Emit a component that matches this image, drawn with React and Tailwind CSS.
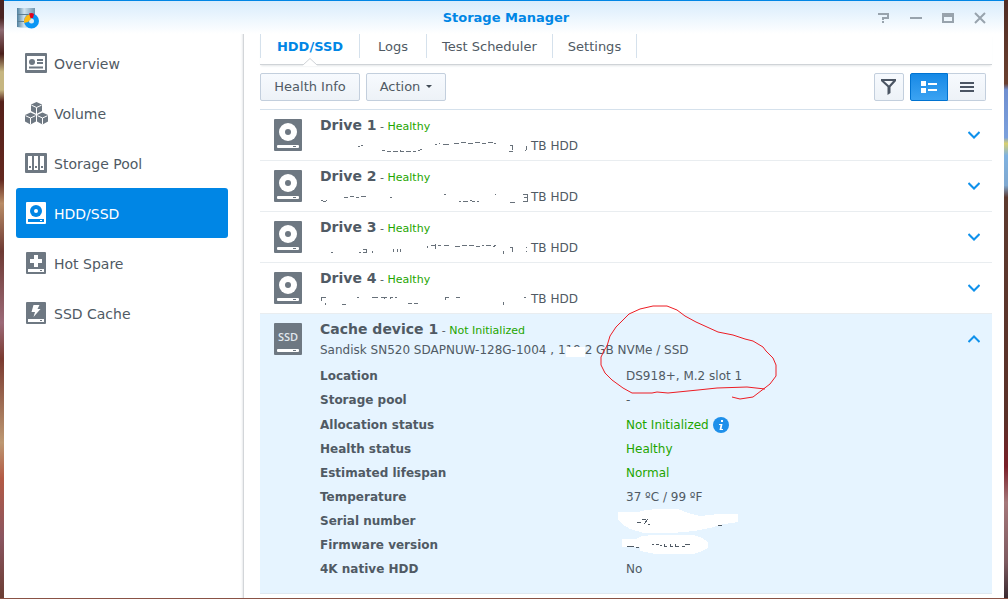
import { useState } from "react";

const menu = [
  { id: "overview", label: "Overview" },
  { id: "volume", label: "Volume" },
  { id: "pool", label: "Storage Pool" },
  { id: "hdd", label: "HDD/SSD" },
  { id: "spare", label: "Hot Spare" },
  { id: "cache", label: "SSD Cache" },
];

const tabs = ["HDD/SSD", "Logs", "Test Scheduler", "Settings"];

// marks: what is left of the erased model names
const drives = [
  {
    name: "Drive 1",
    marks:
      "M38 5h2M41 4h2M62 9h3M67 10h4M73 10h5M80 9v1h4M86 10h5M93 10h3M98 9h2l2-1M115 3h2M119 2h1M123 3h6M134 2h5M141 1h5M148 2h5M155 1h5M162 2h4M168 1h5M174 2h2M190 4h2v5M189 10h4M206 5v4l-1 1",
  },
  {
    name: "Drive 2",
    marks:
      "M1 8l2 1h3l1-1M24 5h4M30 4h4M36 5h3M41 4h5M70 5h2M124 2h2M139 9h2M143 9h5M150 8l2 1h3M157 9h2M175 2h1M190 10h5M203 2h4v3h-3M206 5h1v4h-4",
  },
  {
    name: "Drive 3",
    marks:
      "M11 9h2M39 9h2M43 6h3v3h-3M52 8v2M73 6v3M77 9v-3M80 6v3M107 3v2M111 3l4-1v4M118 2h3M124 2h5M135 3h5M142 2h5M149 2h5M156 3h4M162 2h2M166 2h5M173 4l3-2M184 8l-1 3M190 4h2v5M206 4v1M206 8v1",
  },
  {
    name: "Drive 4",
    marks:
      "M6 3h-4l-1 2v2M5 9v2M22 10l4 1M37 3h2M52 4l2-1h4M61 3h6M64 3v2M70 5v-2h3M75 3h2M88 9h4M94 9h4M125 6v-3h4M136 3h4M184 8l-1 3M204 4l2-1",
  },
];

const details = [
  { label: "Location", value: "DS918+, M.2 slot 1" },
  { label: "Storage pool", value: "-" },
  { label: "Allocation status", value: "Not Initialized", good: true, info: true },
  { label: "Health status", value: "Healthy", good: true },
  { label: "Estimated lifespan", value: "Normal", good: true },
  { label: "Temperature", value: "37 ºC / 99 ºF" },
  { label: "Serial number", value: <SerialSmudge /> },
  { label: "Firmware version", value: <FirmwareSmudge /> },
  { label: "4K native HDD", value: "No" },
];

function SerialSmudge() {
  return (
    <svg width="122" height="26" viewBox="0 0 122 26" className="-ml-2" shapeRendering="crispEdges">
      <path
        fill="#fff"
        d="M0 4h20l8-2 12-1h20l10 4 12 3 18-2h20v8l-14 2-14 4-16 3-22 2H26l-14-4-8-5-4-5z"
      />
      <path d="M19 14h4M24 11h4M30 11l-4 5M30 16h2M100 17h4" stroke="#505a64" fill="none" />
    </svg>
  );
}

function FirmwareSmudge() {
  return (
    <svg width="90" height="20" viewBox="0 0 90 20" className="-ml-1" shapeRendering="crispEdges">
      <path fill="#fff" d="M0 4h14l6-3 12-1h40l8 3 6 4v6l-6 3-8 3H34l-16-3V12H0z" />
      <path
        d="M5 11h7M14 12h3M30 9h2M34 9h3M38 10h2M42 9v2h3M48 9v2h3M53 9v2h4M60 11h3M63 9h5"
        stroke="#505a64"
        fill="none"
      />
    </svg>
  );
}

function MenuIcon({ id, active }) {
  const fg = active ? "#fff" : "#6e7882";
  const hole = active ? "#0086e5" : "#fff";
  if (id === "overview") {
    return (
      <svg width="24" height="24" viewBox="0 0 24 24">
        <rect x="1" y="2" width="22" height="20" rx="1" fill={fg} />
        <rect x="3" y="5" width="18" height="14" fill={hole} />
        <circle cx="8" cy="11" r="3" fill={fg} />
        <path d="M13 9h6M13 12h6M5 16.5h14" stroke={fg} strokeWidth="2" />
      </svg>
    );
  }
  if (id === "volume") {
    return (
      <svg width="24" height="24" viewBox="0 0 24 24">
        {[
          [12.5, 1],
          [6.5, 11.5],
          [18.5, 11.5],
        ].map(([x, y]) => (
          <g key={x} transform={`translate(${x} ${y})`}>
            <path d="M0 0l5.5 2.5v6.5L0 12l-5.5-3V2.5z" fill={fg} />
            <path d="M-5 3.2L0 5.5l5-2.3M0 5.5V12" stroke={hole} fill="none" />
          </g>
        ))}
      </svg>
    );
  }
  if (id === "pool") {
    return (
      <svg width="24" height="24" viewBox="0 0 24 24">
        <rect x="1" y="2" width="22" height="20" rx="1" fill={fg} />
        <path d="M4 5h4v14H4zM10 5h4v14h-4zM16 5h4v14h-4z" fill={hole} />
        <path d="M5 15h2v2H5zM11 15h2v2h-2zM17 15h2v2h-2z" fill={fg} />
      </svg>
    );
  }
  return (
    <svg width="24" height="24" viewBox="0 0 24 24">
      <rect x="2" y="1" width="20" height="22" rx="1" fill={fg} />
      <path d="M4 18h16v3H4z" fill={hole} />
      <path d="M16 19h2v1h-2z" fill={fg} />
      {id === "hdd" && (
        <>
          <circle cx="12" cy="10" r="6" fill={hole} />
          <circle cx="12" cy="10" r="2" fill={fg} />
        </>
      )}
      {id === "spare" && <path d="M10 4h4v4h4v4h-4v4h-4v-4H6V8h4z" fill={hole} />}
      {id === "cache" && <path d="M9.500 4H15.500L13.500 8H16.500L9.500 16L11 11H7.500z" fill={hole} />}
    </svg>
  );
}

function DriveIcon({ ssd }) {
  return (
    <svg width="28" height="32" viewBox="0 0 28 32" className="shrink-0">
      <rect width="28" height="32" rx="1" fill="#6e7882" />
      <rect x="3" y="26" width="22" height="3" rx="1" fill="#fff" />
      <path d="M19 27h3v1h-3z" fill="#6e7882" />
      {ssd ? (
        <text
          x="14"
          y="18"
          textAnchor="middle"
          fontSize="11"
          fontFamily="Open Sans, sans-serif"
          fontWeight="600"
          fill="#e1e8ee"
        >
          SSD
        </text>
      ) : (
        <>
          <circle cx="14" cy="13" r="9" fill="#fff" />
          <circle cx="14" cy="13" r="3" fill="#6e7882" />
        </>
      )}
    </svg>
  );
}

function Chevron({ up }) {
  return (
    <svg width="12" height="8" viewBox="0 0 12 8">
      <path
        d={up ? "M0.500 7L6 1.500L11.500 7" : "M0.500 1L6 6.500L11.500 1"}
        stroke="#0f91eb"
        strokeWidth="2"
        fill="none"
      />
    </svg>
  );
}

function DriveHeader({ name, status, open, ssd, onToggle, children }) {
  return (
    <div className="flex h-[50px] items-start pl-3.5 pr-3">
      <div className="pt-[9px]">
        <DriveIcon ssd={ssd} />
      </div>
      <div className="ml-[18px] flex-1 pt-[5px] whitespace-nowrap">
        <h3 className="text-[11px] leading-5">
          <span className="text-[14px] font-bold">{name}</span>
          <span> - </span>
          <span className="text-[#1ea500]">{status}</span>
        </h3>
        <div className="flex items-center text-[12px] leading-[18px]">{children}</div>
      </div>
      <button
        type="button"
        aria-label={`Toggle ${name}`}
        aria-expanded={open}
        onClick={onToggle}
        className="flex h-[50px] items-center"
      >
        <Chevron up={open} />
      </button>
    </div>
  );
}

function TitleBar() {
  return (
    <header className="grid h-[34px] grid-cols-3 items-center border-t border-[#0086e5] bg-linear-to-b from-[#d8ecfc] to-white pr-2 pl-3">
      <svg width="24" height="24" viewBox="0 0 24 24">
        <defs>
          <linearGradient id="disk">
            <stop offset="0" stopColor="#4f7f9e" />
            <stop offset="0.4" stopColor="#cfe3ef" />
            <stop offset="1" stopColor="#6f95ae" />
          </linearGradient>
        </defs>
        <path d="M1 2h18v18q-9 3-18 1z" fill="url(#disk)" />
        <path d="M1 8.500h18M1 15.500h10" stroke="#5b7f95" />
        <circle cx="15.500" cy="15" r="5" fill="#dcebf5" stroke="#0a96f5" strokeWidth="5" />
        <path d="M8 17A8 8 0 0 1 14 8L15 13L12 16z" fill="#fdb913" />
        <path d="M13 7.500Q16 6.500 18 8L17 12H14.500z" fill="#e2041b" />
      </svg>
      <h1 className="text-center text-[13px] font-bold text-[#0086e5]">Storage Manager</h1>
      <div className="flex justify-end text-[#98a3ad]">
        <button type="button" aria-label="Help" className="flex w-8 justify-center">
          <svg width="12" height="12" viewBox="0 0 12 12">
            <path d="M0 2h10v4H5v2" stroke="currentColor" strokeWidth="2" fill="none" />
            <path d="M4 9h2v2H4z" fill="currentColor" />
          </svg>
        </button>
        <button type="button" aria-label="Minimize" className="flex w-8 justify-center">
          <svg width="12" height="12" viewBox="0 0 12 12">
            <path d="M0 6h12" stroke="currentColor" strokeWidth="2" />
          </svg>
        </button>
        <button type="button" aria-label="Maximize" className="flex w-8 justify-center">
          <svg width="12" height="12" viewBox="0 0 12 12">
            <path d="M1 2v8h10V2" stroke="currentColor" strokeWidth="2" fill="none" />
            <path d="M0 1h12v4H0z" fill="currentColor" />
          </svg>
        </button>
        <button type="button" aria-label="Close" className="flex w-8 justify-center">
          <svg width="12" height="12" viewBox="0 0 12 12">
            <path d="M1 1l10 10M11 1L1 11" stroke="currentColor" strokeWidth="2" />
          </svg>
        </button>
      </div>
    </header>
  );
}

function Toolbar() {
  const button =
    "flex h-7 items-center justify-center border border-[#c3cfdd] bg-linear-to-b from-[#f7fafe] to-[#edf2f7]";
  return (
    <div className="flex items-center pt-2 pr-1.5 pb-2">
      <button type="button" className={`${button} w-[100px] rounded-xs`}>
        Health Info
      </button>
      <button type="button" className={`${button} ml-1.5 w-20 gap-1.5 rounded-xs`}>
        Action
        <svg width="6" height="4" viewBox="0 0 6 4">
          <path d="M0 0h6L3 3z" fill="#414b55" />
        </svg>
      </button>
      <button
        type="button"
        aria-label="Filter"
        className={`${button} ml-auto w-[30px] rounded-xs`}
      >
        <svg width="16" height="16" viewBox="0 0 16 16">
          <path d="M0 0h15v2l-5.500 6v6l-3 2V8L0 2z" fill="#4b5563" />
          <path d="M3 2h9L8 6.500z" fill="#f5f8fc" />
        </svg>
      </button>
      <button
        type="button"
        aria-label="Detail view"
        className="ml-1.5 flex h-7 w-[38px] items-center justify-center rounded-l-xs border border-[#0073d1] bg-linear-to-b from-[#1489e6] to-[#3ba3f2]"
      >
        <svg width="16" height="12" viewBox="0 0 16 12">
          <path d="M0 0h5v5H0zM0 7h5v5H0zM7 2h9v2H7zM7 8h9v2H7z" fill="#fff" />
        </svg>
      </button>
      <button
        type="button"
        aria-label="List view"
        className={`${button} w-[38px] rounded-r-xs border-l-0`}
      >
        <svg width="14" height="10" viewBox="0 0 14 10">
          <path d="M0 0h14v2H0zM0 4h14v2H0zM0 8h14v2H0z" fill="#4b5563" />
        </svg>
      </button>
    </div>
  );
}

function CacheDevice() {
  const [open, setOpen] = useState(true);
  return (
    <li className="relative border-b border-[#dfe8f0] bg-[#e6f4ff]">
      <DriveHeader
        name="Cache device 1"
        status="Not Initialized"
        ssd
        open={open}
        onToggle={() => setOpen(!open)}
      >
        <span>
          Sandisk SN520 SDAPNUW-128G-1004 , 1
          <span className="relative">
            19.
            <span className="absolute inset-x-0 top-1 bottom-0 bg-white" />
          </span>
          2 GB NVMe / SSD
        </span>
      </DriveHeader>
      {open && (
        <dl className="pb-3 pl-[60px] text-[12px]">
          {details.map((row) => (
            <div
              key={row.label}
              className={`flex items-center ${row.info ? "h-[25px]" : "h-6"}`}
            >
              <dt className="w-[306px] shrink-0 font-bold">{row.label}</dt>
              <dd className={`flex items-center gap-1 ${row.good ? "text-[#1ea500]" : ""}`}>
                {row.value}
                {row.info && (
                  <svg width="16" height="16" viewBox="0 0 16 16">
                    <circle cx="8" cy="8" r="8" fill="#1e8fea" />
                    <path d="M8 3h2v2H8zM6 7h3.500l-1 5H10v1H6.500l1-5H6z" fill="#fff" />
                  </svg>
                )}
              </dd>
            </div>
          ))}
        </dl>
      )}
      {/* hand-drawn circle round the slot */}
      <svg
        width="178"
        height="96"
        viewBox="0 0 178 96"
        className="pointer-events-none absolute -top-[9px] left-[340px]"
      >
        <path
          d="M165 84L147 82L117 83L98 85L68 88L57 87L52 88H32L23 83L12 75L5 68L1 60V52L5 44L7 41L10 31L16 22L29 9L40 4L53 1H67L77 5L85 11L96 17L107 22L118 27L133 30L145 34L153 36L163 42L166 46L173 53L176 60V71L170 79L153 92L140 94L132 92"
          stroke="#ed1c24"
          fill="none"
        />
      </svg>
    </li>
  );
}

function App() {
  const [page, setPage] = useState("hdd");
  const [tab, setTab] = useState("HDD/SSD");

  return (
    <div className="min-h-screen bg-linear-to-b from-[#4a2420] via-[#5d3a2f] to-[#8a5245] font-['DejaVu_Sans',Verdana,sans-serif] text-[13px] text-[#505a64]">
      <div className="flex">
        <div className="w-1 bg-[linear-gradient(#4a2422_3%,#8d6a72_5%,#4a1f1a_9%,#c6b681_12%,#c6b681_15%,#55201a_17%,#63281f_30%,#b98c66_34%,#6e3a34_42%,#9c6a78_54%,#7a3a30_60%,#bd9872_74%,#b35a45_80%,#8a5560_90%,#6b3d33_100%)]" />
        <div className="min-w-0 flex-1 bg-white">
          <TitleBar />
          <div className="flex">
            <nav className="w-60 shrink-0 border-r border-[#d3d6d9] pt-1 pr-[15px] pl-3 shadow-[inset_-3px_0_2px_-2px_#e8eaec]">
              {menu.map((item) => (
                <button
                  key={item.id}
                  type="button"
                  onClick={() => setPage(item.id)}
                  className={`flex h-[50px] w-full items-center gap-1.5 rounded-[3px] pl-2 text-left text-[14px] ${
                    page === item.id ? "bg-[#0086e5] text-white" : ""
                  }`}
                >
                  <MenuIcon id={item.id} active={page === item.id} />
                  <span className="pt-0.5">{item.label}</span>
                </button>
              ))}
            </nav>
            <main className="min-w-0 flex-1 pr-3 pb-1 pl-4">
              <div className="flex h-[31px] items-start border-b border-[#cfd3d7] shadow-[0_2px_2px_-1px_#e4e6e8]">
                {tabs.map((name) => (
                  <button
                    key={name}
                    type="button"
                    onClick={() => setTab(name)}
                    className={`relative h-6 min-w-[67px] border-r border-[#d5e1ec] px-[15px] pt-px first:w-[100px] first:border-l ${
                      tab === name ? "font-bold text-[#0086e5]" : ""
                    }`}
                  >
                    {name}
                    {tab === name && (
                      <svg
                        width="14"
                        height="8"
                        viewBox="0 0 14 8"
                        className="absolute top-6 left-1/2 -translate-x-1/2"
                      >
                        <path d="M0 7L7 0L14 7V8H0z" fill="#fff" />
                        <path d="M0 7L7 0.500L14 7" stroke="#cfd3d7" fill="none" />
                      </svg>
                    )}
                  </button>
                ))}
              </div>
              <Toolbar />
              <ul className="border-t border-[#d5e1ec]">
                {drives.map((drive) => (
                  <li key={drive.name} className="border-b border-[#e9edf0]">
                    <DriveHeader name={drive.name} status="Healthy">
                      <svg
                        width="211"
                        height="18"
                        viewBox="0 -4 211 18"
                        shapeRendering="crispEdges"
                      >
                        <path d={drive.marks} stroke="#68717a" fill="none" />
                      </svg>
                      TB HDD
                    </DriveHeader>
                  </li>
                ))}
                <CacheDevice />
              </ul>
            </main>
          </div>
        </div>
        <div className="w-1 bg-[linear-gradient(#4f2c24_0%,#6b4030_14%,#6f8fd0_15%,#7ba0dc_23%,#d8d070_24%,#7fb2e0_26%,#7fa8d0_31%,#5d3a2f_33%,#5a3028_70%,#7a1f28_78%,#a5787a_84%,#7d5a60_94%,#3a2a30_100%)]" />
      </div>
    </div>
  );
}

export default App;
